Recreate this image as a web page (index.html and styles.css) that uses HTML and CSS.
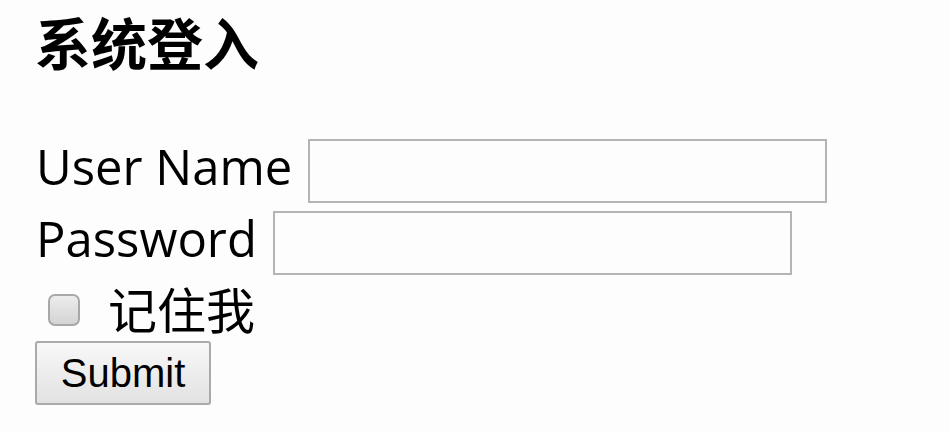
FILE: index.html
```html
<!DOCTYPE html>
<html lang="zh">
<head>
<meta charset="utf-8">
<title>系统登入</title>
<link rel="stylesheet" href="styles.css">
</head>
<body>
<form class="login">
  <h1 class="title">系统登入</h1>
  <div class="row">
    <label class="label" for="user">User Name</label>
    <input class="field" id="user" type="text">
  </div>
  <div class="row">
    <label class="label" for="pass">Password</label>
    <input class="field" id="pass" type="password">
  </div>
  <div class="row remember">
    <span class="check"></span>
    <span class="remember-text">记住我</span>
  </div>
  <button class="submit" type="button">Submit</button>
</form>
</body>
</html>
```
FILE: styles.css
```css
html, body {
  margin: 0;
  padding: 0;
  background: #fdfdfd;
}
.login {
  padding: 0 0 0 35px;
  font-family: "Open Sans", "Noto Sans CJK SC", sans-serif;
  color: #000;
}
.title {
  margin: 0;
  height: 135px;
  box-sizing: border-box;
  font-family: "Noto Sans CJK SC", sans-serif;
  font-size: 56px;
  font-weight: 700;
  line-height: 82px;
}
.row {
  display: flex;
  align-items: center;
  height: 72px;
  gap: 14px;
}
.label {
  font-size: 49px;
  padding: 0 2px 10px 1px;
}
.field {
  margin: 0;
  width: 519px;
  height: 64px;
  box-sizing: border-box;
  border: 2px solid #b4b4b4;
  background: #fdfdfd;
}
.remember {
  height: 62px;
  gap: 28px;
}
.check {
  margin-left: 13px;
  width: 32px;
  height: 32px;
  box-sizing: border-box;
  border: 2px solid #a8a8a8;
  border-radius: 7px;
  background: linear-gradient(#ececec, #d4d4d4);
}
.remember-text {
  font-family: "Noto Sans CJK SC", sans-serif;
  font-size: 49px;
  padding-bottom: 6px;
}
.submit {
  display: block;
  width: 176px;
  height: 64px;
  margin: 0;
  padding: 0;
  border: 2px solid #aaa;
  border-radius: 3px;
  background: linear-gradient(#f8f8f8, #e2e2e2);
  font-family: "Liberation Sans", sans-serif;
  font-size: 40px;
  color: #000;
}
```
